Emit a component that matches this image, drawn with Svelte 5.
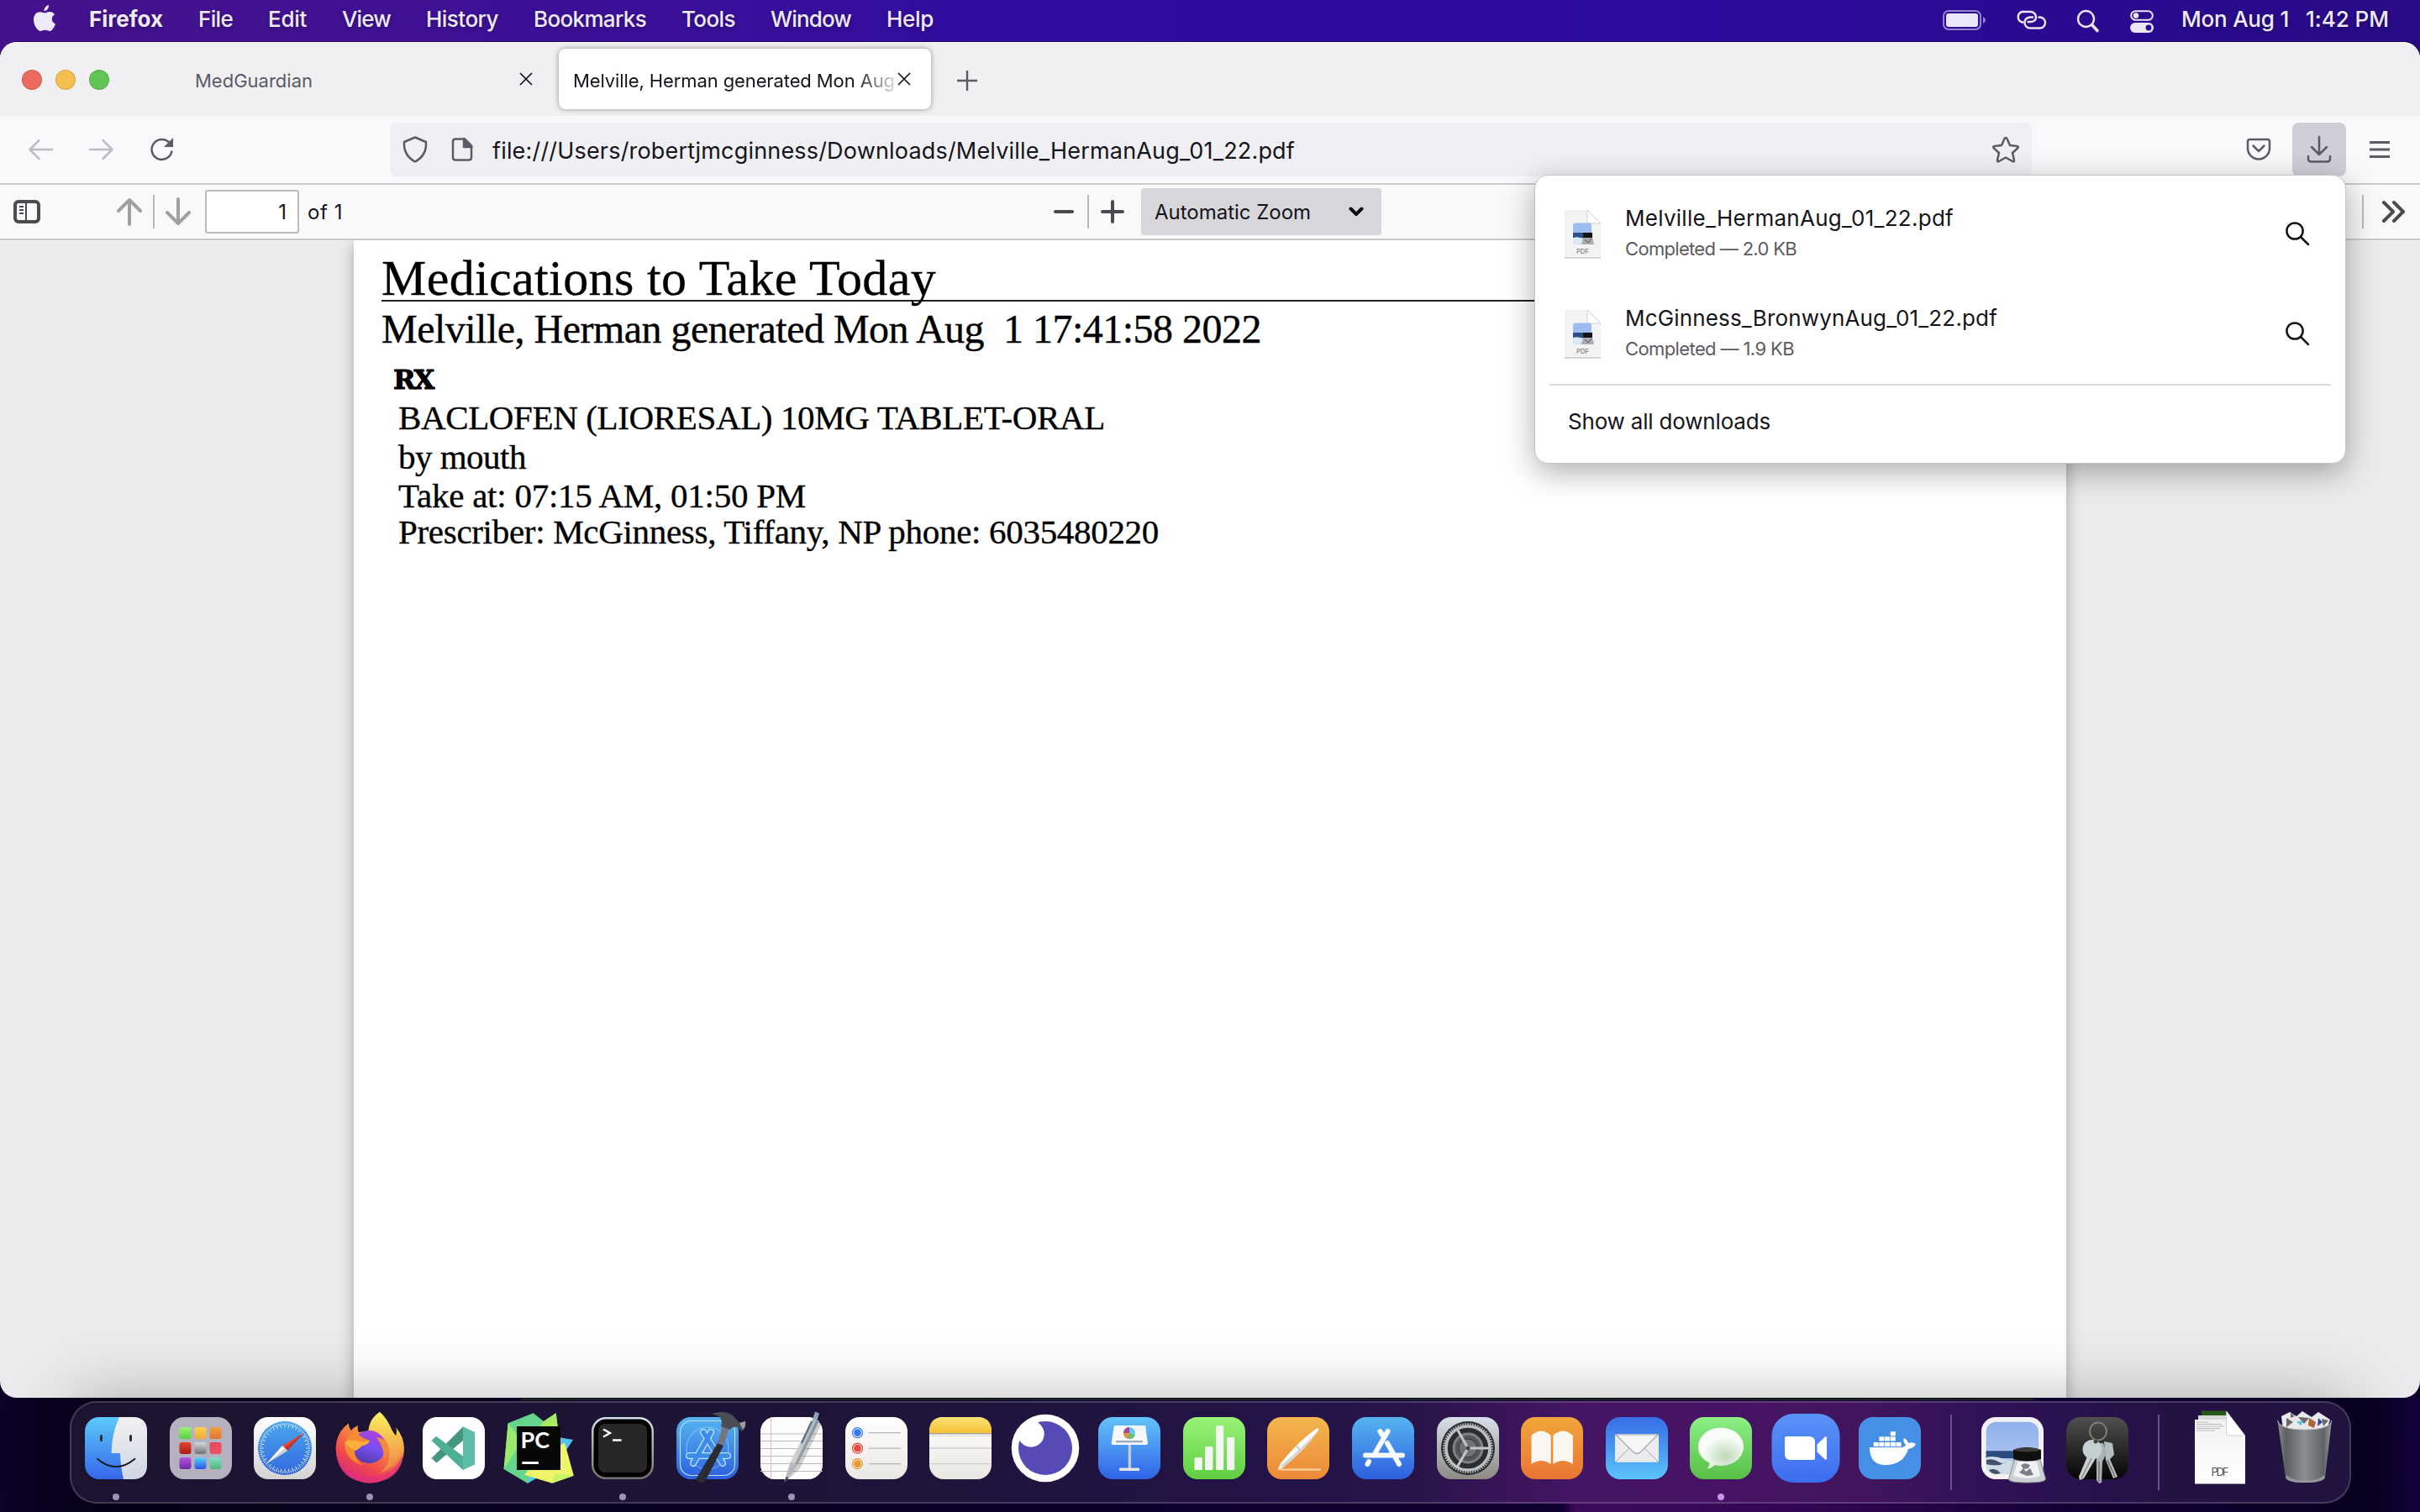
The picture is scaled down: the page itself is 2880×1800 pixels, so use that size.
<script>
  const menus = [
    { label: 'File', width: 41 },
    { label: 'Edit', width: 46 },
    { label: 'View', width: 58 },
    { label: 'History', width: 86 },
    { label: 'Bookmarks', width: 134 },
    { label: 'Tools', width: 64 },
    { label: 'Window', width: 96 },
    { label: 'Help', width: 56 }
  ];

  const downloads = [
    { name: 'Melville_HermanAug_01_22.pdf', nameWidth: 391, status: 'Completed — 2.0 KB', statusWidth: 204 },
    { name: 'McGinness_BronwynAug_01_22.pdf', nameWidth: 443, status: 'Completed — 1.9 KB', statusWidth: 201 }
  ];

  const apps = [
    'finder', 'launchpad', 'safari', 'firefox', 'vscode', 'pycharm', 'terminal', 'xcode', 'textedit',
    'reminders', 'notes', 'insomnia', 'keynote', 'numbers', 'pages', 'appstore', 'settings', 'books',
    'mail', 'messages', 'zoom', 'docker'
  ];
  const running = ['finder', 'firefox', 'terminal', 'textedit', 'messages'];

  const pads = [
    ['#9df27a', '#55cf3a'], ['#f8d24e', '#f0a93a'], ['#f0a23c', '#de7430'],
    ['#e8432f', '#a81f16'], ['#d5dadd', '#707070'], ['#e9455c', '#ea5564'],
    ['#b455e0', '#6f2aa5'], ['#55d5fa', '#2f50e2'], ['#7fe0cf', '#52b573']
  ];
  const ticks = Array.from({ length: 72 }, (_, i) => i * 5);
  const teeth = Array.from({ length: 60 }, (_, i) => i * 6);

  // Spreads a label over a set width by adjusting its tracking.
  function fit(node, width) {
    const range = document.createRange();
    range.selectNodeContents(node);
    const natural = range.getBoundingClientRect().width;
    node.style.letterSpacing = `${(width - natural) / node.textContent.length}px`;
  }
</script>

{#snippet magnifier()}
  <svg class="find" width="30" height="30" viewBox="0 0 30 30"><circle cx="12" cy="12" r="9.6" /><path d="M19 19l9 9" /></svg>
{/snippet}

{#snippet squircle(fill)}
  <rect x="13" y="19" width="74" height="74" rx="17" {fill} />
{/snippet}

{#snippet icon(name)}
  {#if name === 'finder'}
    {@render squircle('url(#gFinder)')}
    <path d="M54 19H70Q87 19 87 36V76Q87 93 70 93H59Q55.500 79 55 62H44.500Q45 38 54 19Z" fill="url(#gFace)" />
    <path d="M32.500 41.500v5M67.500 41.500v5" stroke="#2a2d33" stroke-width="3" stroke-linecap="round" />
    <path d="M28 68.700Q50 87.500 72.400 68.700" fill="none" stroke="#15171c" stroke-width="1.800" stroke-linecap="round" />
  {:else if name === 'launchpad'}
    {@render squircle('#b4b2bf')}
    {#each pads as pad, i}
      <linearGradient id={`pad${i}`} x2="0" y2="1"><stop stop-color={pad[0]} /><stop offset="1" stop-color={pad[1]} /></linearGradient>
      <rect x={24.500 + (i % 3) * 18} y={31 + Math.floor(i / 3) * 18} width="14" height="14" rx="3" fill={`url(#pad${i})`} />
    {/each}
  {:else if name === 'safari'}
    {@render squircle('url(#gPaper)')}
    <circle cx="50" cy="56" r="32" fill="url(#gSafari)" />
    {#each ticks as a, i}
      <path d={`M50 26v${i % 2 ? 2.500 : 5}`} stroke="#e6f2ff" stroke-width=".9" transform={`rotate(${a} 50 56)`} />
    {/each}
    <path d="M73 37.500L47 53l6 6z" fill="#e2483d" /><path d="M73 37.500L50 56l3 3z" fill="#b8342d" />
    <path d="M28 74.500L47 53l6 6z" fill="#fff" /><path d="M28 74.500L50 56l3 3z" fill="#cdd2d8" />
  {:else if name === 'firefox'}
    <path d="M62 13Q71 21 76 34Q79 39 81 41Q83 36 81 31Q91 43 91 57A40.500 40.500 0 0 1 9.600 57Q10 37 25 26.500Q25 32 28 35Q31 31 36 29Q35 34 37 37Q43 36 48 36Q50 21 62 13Z" fill="url(#gFox)" />
    <path d="M10 62Q20 89 50 90Q80 89 90 62Q88 96 50 97Q14 96 10 62Z" fill="#e0307d" opacity=".7" />
    <path d="M62 13Q49 21 49 36Q65 36 72 52Q78 72 62 86Q88 76 87 51Q86 44 81 41Q79 40 76 34Q71 21 62 13Z" fill="url(#gFlame)" />
    <circle cx="49.500" cy="54.500" r="19.500" fill="url(#gOrb)" />
    <path d="M33 36Q38 43 50 47Q49 51 43 52Q34 52 32 59Q32 70 42 76Q24 73 20 53Q22 41 33 36Z" fill="#f58a32" />
    <path d="M20 50Q23 45 33 47Q40 50 50 47Q48 52 41 53Q36 58 33 59Q26 56 20 50Z" fill="#fcb03a" />
    <path d="M58 43Q65 43 70 50Q73 60 67 69Q67 55 58 43Z" fill="#f08a42" />
  {:else if name === 'vscode'}
    {@render squircle('#fff')}
    <path d="M23.500 68l6 5.500L61 47V30.500z" fill="#46967f" />
    <path d="M23.500 47l5.500-5.200L61 65.500V82z" fill="#4db095" />
    <path d="M61 30.300L75 37v38.500L61 82z" fill="#5dbda6" />
  {:else if name === 'pycharm'}
    <path d="M68 42L91 46 70 78 37 98 20 80z" fill="#4ec6ef" />
    <path d="M43.600 14.300L13.600 26.300 8.600 81 36.800 97.700 50 70 74 42 70.700 14.300 56 24z" fill="#64d68c" />
    <path d="M13.600 26.300L8.600 81 30 48z" fill="#9be86b" /><path d="M56 24L70.700 14.300 74 40 48 34z" fill="#a8ea62" />
    <path d="M81 49.300L91.800 88.700 66 97.700 33 87.700 42 76z" fill="#eef568" /><path d="M70 86L91.800 88.700 66 97.700z" fill="#c8f56a" />
    <rect x="24" y="30" width="52" height="52" fill="#050805" />
    <text x="28.500" y="56" class="pc">PC</text><rect x="30.400" y="72" width="19.600" height="3" fill="#fff" />
  {:else if name === 'terminal'}
    {@render squircle('url(#gBezel)')}
    <rect x="15.500" y="21.500" width="69" height="69" rx="14.500" fill="#000" /><rect x="21" y="27" width="58" height="58" rx="8" fill="#272727" />
    <path d="M27 33.500l8 4.500-8 4.500M38 46.500h10.500" fill="none" stroke="#fff" stroke-width="2.400" />
  {:else if name === 'xcode'}
    {@render squircle('url(#gBlue)')}
    <g fill="none" stroke="#b9e2ff" stroke-width="1.200">
      <rect x="17.500" y="23.500" width="65" height="65" rx="13" /><circle cx="50" cy="56" r="25" opacity=".45" />
      <g stroke-width="8" stroke-linecap="round"><path d="M28 65h46M54 37L33 74M45 37L68 74" /></g>
      <g stroke="#3c8de8" stroke-width="5.400" stroke-linecap="round"><path d="M28 65h46M54 37L33 74M45 37L68 74" /></g>
    </g>
    <path d="M62 50L69 53 47 96Q41 99 36 93z" fill="#2b2c33" /><path d="M68 29L76 32 69 53 62 50z" fill="#74777f" />
    <path d="M55 15Q70 10 80 17L88 26 95 24Q97 31 91 36L85 31Q80 30 77 34L66 30Q70 18 55 15Z" fill="#4b4d54" /><path d="M88 26l7-2q1 6-3 10z" fill="#9a9ca2" />
  {:else if name === 'textedit'}
    {@render squircle('#fcfcfc')}
    <path d="M13 39h74M13 47.500h74M13 56.500h74M13 65.500h74M13 74.500h74M13 83.500h74" stroke="#bcbcbe" stroke-width="1" />
    <path d="M25.500 19v74" stroke="#f2b5b3" stroke-width="1" />
    <path d="M80 22L86 26 60 80 44 95 51 73z" fill="#000" opacity=".18" />
    <path d="M75.500 20L83 23.500 57 76 49 72z" fill="url(#gPen)" /><path d="M80 22L83 23.500 57 76 54 74.500z" fill="#6f7d88" opacity=".6" /><path d="M49 72l8 4-14 20-1.500-.7z" fill="#b4b8bd" /><path d="M44 90l2 1-3.500 6-1-.5z" fill="#333" />
    <path d="M78 12.500l5 2-2.500 8-5-2.500z" fill="#91a2ae" /><path d="M74 24L62 50" stroke="#5c6975" stroke-width="2" />
  {:else if name === 'reminders'}
    {@render squircle('url(#gWarm)')}
    {#each ['#3478f6', '#e84b3c', '#e9982f'] as c, i}
      <circle cx="27.500" cy={37.700 + i * 18.500} r="4.400" fill={c} /><circle cx="27.500" cy={37.700 + i * 18.500} r="6" fill="none" stroke={c} stroke-width="1.200" />
      <path d={`M41 ${37.700 + i * 18.500}h38`} stroke="#b6b5ba" stroke-width="1.300" />
    {/each}
  {:else if name === 'notes'}
    {@render squircle('url(#gWarm)')}
    <path d="M13 38V36Q13 19 30 19H70Q87 19 87 36V38Z" fill="url(#gNote)" />
    <path d="M13 38.700h74" stroke="#a8a39b" stroke-width="1.400" /><path d="M15 41.500h71" stroke="#b5b3ae" stroke-width="1" stroke-dasharray="1 1.500" />
    <path d="M13 56h74M13 74.700h74" stroke="#cfcdd0" stroke-width="1.300" />
  {:else if name === 'insomnia'}
    <circle cx="50" cy="56" r="40.300" fill="#fff" /><circle cx="50" cy="56" r="32" fill="#564bb6" /><circle cx="33" cy="39" r="15.700" fill="#fff" />
  {:else if name === 'keynote'}
    {@render squircle('url(#gSky)')}
    <rect x="48.700" y="52" width="3.400" height="28" fill="#c4cad6" /><rect x="38" y="79.500" width="24" height="3.500" rx="1" fill="#e2e4ea" />
    <path d="M32 29H69L72 50Q72 52 70 52H30.500Q28.500 52 28.500 50Z" fill="#f5f7fa" /><path d="M34 47h32v2.300H34z" fill="#9cacbc" />
    <circle cx="50" cy="38" r="7" fill="#66c8f4" /><path d="M50 38v-7a7 7 0 0 0-7 7z" fill="#a24a96" /><path d="M50 38h-7a7 7 0 0 0 5 6.600z" fill="#f09040" /><path d="M50 38l-2 6.700a7 7 0 0 0 8.700-4z" fill="#6cc064" />
  {:else if name === 'numbers'}
    {@render squircle('url(#gGreen)')}
    <g fill="#f3f7f2"><rect x="26.500" y="67" width="9.500" height="15" rx="1.500" /><rect x="39" y="54" width="9.500" height="28" rx="1.500" /><rect x="52" y="29.300" width="9.200" height="52.700" rx="1.500" /><rect x="65" y="43" width="9.200" height="39" rx="1.500" /></g>
  {:else if name === 'pages'}
    {@render squircle('url(#gOrange)')}
    <path d="M29 81.500h47" stroke="#fbd5a8" stroke-width="2" stroke-linecap="round" />
    <path d="M25.500 82L29 74Q48 50 71 33Q75 31 74 35Q60 56 32 79Z" fill="#fbfbfb" /><path d="M29 77Q52 58 74 35Q60 57 32 79Z" fill="#d9d4cf" /><path d="M47.500 53.500l4 4" stroke="#8d8a88" />
  {:else if name === 'appstore'}
    {@render squircle('url(#gBlue)')}
    <g stroke="#f7fafe" stroke-width="6" stroke-linecap="round"><path d="M29 64.500H73M55.500 36L41 61M46.500 36l3 5M55 50L69 75M33 72l-1.500 3" /></g>
  {:else if name === 'settings'}
    {@render squircle('url(#gSteel)')}
    <circle cx="50" cy="56" r="32" fill="#2b2d2e" />
    {#each teeth as a}<path d="M50 26v4" stroke="#b9bcbd" stroke-width="1.500" transform={`rotate(${a} 50 56)`} />{/each}
    <circle cx="50" cy="56" r="26" fill="none" stroke="#bcbfc0" stroke-width="3.500" /><circle cx="50" cy="56" r="17" fill="#55585a" stroke="#7e8183" stroke-width="3" /><circle cx="50" cy="56" r="11" fill="#6f7274" stroke="#333" />
    <path d="M50 56H75M50 56L37.500 34M50 56L37.500 78" stroke="#c3c6c7" stroke-width="3" /><circle cx="50" cy="56" r="2.500" fill="#444" />
  {:else if name === 'books'}
    {@render squircle('url(#gBook)')}
    <path d="M25.500 41Q37 30 48.700 41V75Q37 67 25.500 75Z" fill="#faf6f2" /><path d="M51.300 41Q63 30 74.800 41V75Q63 67 51.300 75Z" fill="#faf6f2" />
  {:else if name === 'mail'}
    {@render squircle('url(#gMail)')}
    <rect x="24" y="39.300" width="52" height="33.500" rx="2.500" fill="#ececee" /><path d="M25 72L41 56M75 72L59 56" stroke="#a9abb0" stroke-width="1" />
    <path d="M25 40L45 60Q50 65 55 60L75 40Z" fill="#f5f5f6" stroke="#a9abb0" stroke-width="1.200" />
  {:else if name === 'messages'}
    {@render squircle('url(#gMsg)')}
    <path d="M50 31.700C65 31.700 77 41.500 77 54.300S65 77 50 77Q46 77 42.500 76Q39 80 34 80.300Q37 77 36.500 73.500Q23 67 23 54.300C23 41.500 35 31.700 50 31.700Z" fill="url(#gBubble)" />
  {:else if name === 'zoom'}
    <rect x="9.500" y="15" width="81" height="82" rx="26" fill="url(#gZoom)" />
    <path d="M27 42H54Q61 42 61 49V67.500Q61 70 58.500 70H32Q25 70 25 63V44Q25 42 27 42Z" fill="#fff" /><path d="M63.500 51.500L73 42.500Q75 41.500 75 43.500V68.500Q75 70.500 73 69.500L63.500 60.500Z" fill="#fff" />
  {:else if name === 'docker'}
    {@render squircle('#4590e6')}
    <g fill="#fff">
      {#each [30.700, 37.400, 44.100, 50.800, 57.500] as x}<rect {x} y="49" width="6" height="5" />{/each}
      {#each [37.400, 44.100, 50.800] as x}<rect {x} y="42.400" width="6" height="5" />{/each}
      <rect x="50.800" y="36.300" width="6" height="5" />
      <path d="M26 55H64Q68 55 69 52Q65 48 67 44Q71 46 72 50Q77 48 81 51Q79 56 72 57Q66 76 45 76Q26 76 26 55Z" />
    </g>
  {:else if name === 'preview'}
    {@render squircle('#f3f1f4')}
    <rect x="18.600" y="24.700" width="62.500" height="62" rx="12" fill="url(#gSky2)" /><path d="M18.600 59.300H81V68H18.600z" fill="#2a4a80" /><path d="M18.600 67Q28 64 40 69T81 68V75Q81 87 69 87H31Q18.600 87 18.600 75Z" fill="#cfdce8" />
    <path d="M19 70q8-2 14 2t10 0l-8 4q-10 1-16-1zM22 82q8-3 14 4l-6 1q-6-1-8-5z" fill="#43526a" />
    <path d="M52 70H83L89.500 93Q88 97 67 97T45.500 93Z" fill="#cdd0d3" stroke="#8b8e92" /><path d="M56 72H79L83 89Q68 95 51 89Z" fill="#f0f1f2" /><path d="M60 76l5-2 6 2-2 4-6 1zM58 85l5-5 3 4 5-4 4 8-8 1z" fill="#787f88" />
    <path d="M51 58Q67 52 84 58V69Q67 74 51 69Z" fill="#101010" /><ellipse cx="67.500" cy="58" rx="15" ry="2.500" fill="#3a3a3a" />
  {:else if name === 'keychain'}
    {@render squircle('url(#gKeys)')}
    <ellipse cx="51" cy="36" rx="10" ry="10.500" fill="none" stroke="#857c70" stroke-width="2" />
    <path d="M58 48L68 50 70 64 65 69 74 90 69 92 60 70z" fill="#b3bdbf" /><path d="M48 50h9l4 12-5 10-1 25-3 1-3-4V70z" fill="#a9b3b5" />
    <path d="M62 70L71 90M52 72V96" stroke="#6b5f53" stroke-width="1.200" />
    <circle cx="44" cy="57.500" r="11.500" fill="#c4d0d1" /><path d="M38 66L48 68 34 92 29 94 28 90z" fill="#c4d0d1" /><path d="M43 68L31 92" stroke="#8d8074" stroke-width="1.200" /><circle cx="48" cy="48" r="2.500" fill="#4b463f" />
  {:else if name === 'document'}
    <path d="M28 11.500H57V20H28z" fill="#255717" /><path d="M24 17H60V24H24z" fill="#d8d8d8" />
    <path d="M20 22H58V12L80 41V98.500H20Z" fill="url(#gPaper2)" /><path d="M57.500 12L79.700 41H60Q57.500 41 57.500 38Z" fill="#fff" stroke="#c5c5c5" stroke-width=".8" />
    <path d="M22 25h14M22 27.500h30M22 30h33M22 32.500h28M22 35h22" stroke="#aaa" stroke-width=".8" />
    <text x="50" y="89" class="pdf" textLength="21">PDF</text>
  {:else if name === 'trash'}
    <path d="M22 18L32 13 40 18 47 12 58 19 66 13 80 22 76 34 24 34z" fill="#e9e9e9" /><path d="M28 20l8 5-8 6zM42 19l7 8 6-7zM70 21l8 2-6 7zM33 14l5 4-5 2z" fill="#68696c" /><path d="M55 20l8 5-2 7-7-3z" fill="#b0623a" /><path d="M40 24h8l-3 5z" fill="#53c3e3" /><path d="M66 20l5 5-6 5z" fill="#33479e" />
    <path d="M17.500 23Q21 34 50 34T82 23L74 91Q71 97 50 97T27 91Z" fill="url(#gBin)" /><path d="M17.500 23Q21 34 50 34T82 23" fill="none" stroke="#b7b9bb" stroke-width="1" />
    <path d="M28 88Q36 95 50 95T73 88L74 91Q71 97 50 97T27 91Z" fill="#a5a8aa" opacity=".7" />
  {/if}
{/snippet}

{#snippet slot(name, extra = '')}
  <li class={`slot ${extra}`}>
    <svg width="100" height="118" viewBox="0 0 100 118">
      {@render icon(name)}
      {#if running.includes(name)}<circle cx="50" cy="114" r="4" fill={name === 'messages' ? '#c596ea' : '#9d92b9'} />{/if}
    </svg>
  </li>
{/snippet}

<svg class="defs" width="0" height="0">
  <defs>
    {#each [['gFinder', '#5cc9f8', '#3567ea'], ['gFace', '#f1f1f3', '#ced7e3'], ['gPaper', '#ffffff', '#d3d3d3'], ['gSafari', '#4aa7ee', '#3468dd'], ['gFlame', '#fbf160', '#f07c45'], ['gBezel', '#d5e0ea', '#77716f'], ['gBlue', '#56b5f0', '#2d5fdf'], ['gPen', '#a5b7c5', '#d7d4cf'], ['gWarm', '#ffffff', '#e8e7e2'], ['gNote', '#fbe276', '#f4c235'], ['gSky', '#62c4f9', '#2f62e8'], ['gGreen', '#99f279', '#60cf42'], ['gOrange', '#f4b64d', '#ec8938'], ['gSteel', '#d8e1e9', '#8d8985'], ['gBook', '#f1a63a', '#e97535'], ['gMail', '#376de8', '#5cc3fa'], ['gMsg', '#8cf086', '#58bf47'], ['gZoom', '#5a92f7', '#3d6df0'], ['gSky2', '#8fb0ea', '#b6caf0'], ['gKeys', '#505050', '#050505'], ['gPaper2', '#f0f0f0', '#ffffff']] as [id, from, to]}
      <linearGradient {id} x2="0" y2="1"><stop stop-color={from} /><stop offset="1" stop-color={to} /></linearGradient>
    {/each}
    <linearGradient id="gFox" x1=".8" y1=".1" x2=".3" y2="1"><stop stop-color="#fbe24f" /><stop offset=".4" stop-color="#f7873b" /><stop offset=".75" stop-color="#ee4450" /><stop offset="1" stop-color="#d72f7a" /></linearGradient>
    <linearGradient id="gOrb" x1=".7" x2=".3" y2="1"><stop stop-color="#b03fdc" /><stop offset=".5" stop-color="#7b4ff0" /><stop offset="1" stop-color="#4d3aa8" /></linearGradient>
    <radialGradient id="gBubble" cx=".6" cy=".7"><stop stop-color="#c0d9b9" /><stop offset="1" stop-color="#fafdf9" /></radialGradient>
    <linearGradient id="gBin"><stop stop-color="#8c8f92" /><stop offset=".15" stop-color="#5d6063" /><stop offset=".5" stop-color="#8b8e90" /><stop offset=".85" stop-color="#606366" /><stop offset="1" stop-color="#9a9da0" /></linearGradient>
  </defs>
</svg>

<div class="desktop">
  <header class="menubar">
    <svg class="apple" width="26" height="32" viewBox="0 0 26 32">
      <path d="M18 0C18.300 4 15.500 7 12.500 7.200C12.200 3.500 15 .5 18 0Z" />
      <path d="M13 9.500C14.800 9.500 16.300 8 19 8C21.500 8 23.800 9.200 25 11.300C20.300 14 21 20.600 26 22.500C25 25.300 22.300 31 19.300 31C17.300 31 16.300 29.800 13.700 29.800S10 31 8.200 31C4.500 31 0 23.500 0 17.500C0 11.500 3.800 8.300 7.500 8.300C9.800 8.300 11.700 9.500 13 9.500Z" />
    </svg>
    <span class="app" use:fit={88}>Firefox</span>
    {#each menus as m}<span class="menu" use:fit={m.width}>{m.label}</span>{/each}
    <div class="status">
      <svg class="battery" width="52" height="26" viewBox="0 0 52 26"><rect x="1" y="2" width="44" height="22" rx="6" fill="none" stroke="#9384d2" stroke-width="2" /><rect x="4" y="5" width="38" height="16" rx="3" fill="#eae6f8" /><path d="M48 9q3 1.500 3 4t-3 4z" fill="#9384d2" /></svg>
      <svg class="link" width="38" height="26" viewBox="0 0 38 26"><path d="M9.500 15.500H8.500A6.500 6.500 0 0 1 8.500 3H19A6.500 6.500 0 0 1 25 9.500Q25 14.500 19 15H15.500" /><path d="M28.500 9.500H29.500A6.500 6.500 0 0 1 29.500 22.500H18A6.500 6.500 0 0 1 11.500 16Q11.500 10.500 17.500 9.500H21" /></svg>
      <svg class="spot" width="28" height="28" viewBox="0 0 28 28"><circle cx="11.500" cy="11.500" r="9.500" /><path d="M18.500 18.500L25 25.500" stroke-width="3.600" /></svg>
      <svg class="toggles" width="28" height="28" viewBox="0 0 28 28"><rect x="1.200" y="2.200" width="25.600" height="10.600" rx="5.300" fill="none" stroke="#eae6f8" stroke-width="2" /><circle cx="7" cy="7.500" r="3.200" fill="#eae6f8" /><rect y="16" width="28" height="12" rx="6" fill="#eae6f8" /><circle cx="22" cy="22" r="3.400" fill="#2c0b96" /></svg>
      <span class="date" use:fit={128}>Mon Aug 1</span>
      <span class="time" use:fit={99}>1:42 PM</span>
    </div>
  </header>

  <main class="window">
    <div class="tabs">
      <div class="lights"><i class="red"></i><i class="yellow"></i><i class="green"></i></div>
      <div class="tab">
        <span class="title" use:fit={140}>MedGuardian</span>
        <svg class="x" width="16" height="16" viewBox="0 0 16 16"><path d="M1 1l14 14M15 1L1 15" /></svg>
      </div>
      <div class="tab active">
        <span class="title" use:fit={383}>Melville, Herman generated Mon Aug</span>
        <svg class="x" width="16" height="16" viewBox="0 0 16 16"><path d="M1 1l14 14M15 1L1 15" /></svg>
      </div>
      <svg class="plus" width="24" height="24" viewBox="0 0 24 24"><path d="M12 0v24M0 12h24" /></svg>
    </div>

    <div class="nav">
      <svg class="ico dim back" width="28" height="24" viewBox="0 0 28 24"><path d="M28 12H2M12.500 1L1.500 12l11 11" /></svg>
      <svg class="ico dim fwd" width="28" height="24" viewBox="0 0 28 24"><path d="M0 12h26M15.500 1l11 11-11 11" /></svg>
      <svg class="ico reload" width="30" height="30" viewBox="0 0 30 30"><path d="M26.300 17.500A12 12 0 1 1 24 7.500" /><path d="M28 1v11H17z" fill="#5b5b66" stroke="none" /></svg>
      <div class="url">
        <svg class="ico shield" width="30" height="32" viewBox="0 0 30 32"><path d="M15 1.500L28 7Q29 23 15 30.500Q1 23 2 7Z" /></svg>
        <svg class="ico leaf" width="26" height="28" viewBox="0 0 26 28"><path d="M5 1.500H16L24 9.500V23.500Q24 26.500 21 26.500H5Q2 26.500 2 23.500V4.500Q2 1.500 5 1.500Z" /><path d="M15 1v10h9.500z" fill="#5b5b66" /></svg>
        <span class="address" use:fit={955}>file:///Users/robertjmcginness/Downloads/Melville_HermanAug_01_22.pdf</span>
        <svg class="ico star" width="34" height="32" viewBox="0 0 34 32"><path d="M17 2Q18 2 18.500 3L22 11L30.500 12Q33 12.500 31 14.500L25 20L27 28.500Q27.200 31 25 30L17 25.500L9 30Q6.800 31 7 28.500L9 20L3 14.500Q1 12.500 3.500 12L12 11L15.500 3Q16 2 17 2Z" /></svg>
      </div>
      <svg class="ico pocket" width="30" height="28" viewBox="0 0 30 28"><path d="M4.500 2H25.500Q28 2 28 4.500V12.500A13 13 0 0 1 2 12.500V4.500Q2 2 4.500 2Z" /><path d="M8.500 9.500L15 16l6.500-6.500" /></svg>
      <div class="dlbtn"><svg class="ico" width="30" height="32" viewBox="0 0 30 32"><path d="M15 1v20M6 13l9 9 9-9M2 24v3Q2 30.500 5.500 30.500H24.500Q28 30.500 28 27V24" /></svg></div>
      <svg class="burger" width="24" height="20" viewBox="0 0 24 20"><path d="M0 1.500h24M0 10h24M0 18.500h24" /></svg>
    </div>

    <div class="pdfbar">
      <svg width="32" height="28" viewBox="0 0 32 28"><rect x="2" y="2" width="28" height="24" rx="4" fill="none" stroke="#4a4a4f" stroke-width="4" /><path d="M15 3v22M7 8h5M7 12h5M7 16h5" stroke="#4a4a4f" stroke-width="2" /></svg>
      <svg class="grey up" width="30" height="32" viewBox="0 0 30 32"><path d="M15 31V2M2 15L15 2l13 13" /></svg>
      <i class="vsep"></i>
      <svg class="grey down" width="30" height="32" viewBox="0 0 30 32"><path d="M15 1v29M2 17l13 13 13-13" /></svg>
      <div class="pagebox">1</div>
      <span class="of" use:fit={42}>of 1</span>
      <svg class="minus" width="24" height="28" viewBox="0 0 24 28"><path d="M2 14h20" /></svg>
      <i class="vsep z"></i>
      <svg class="minus add" width="28" height="28" viewBox="0 0 28 28"><path d="M2 14h24M14 2v24" /></svg>
      <div class="select">
        <span use:fit={186}>Automatic Zoom</span>
        <svg width="18" height="12" viewBox="0 0 18 12"><path d="M2.500 2.500L9 9l6.500-6.500" fill="none" stroke="#0c0c0d" stroke-width="4" stroke-linecap="round" stroke-linejoin="round" /></svg>
      </div>
      <i class="vsep end"></i>
      <svg class="more" width="28" height="26" viewBox="0 0 28 26"><path d="M2 2l11 11L2 24M14 2l11 11-11 11" /></svg>
    </div>

    <div class="viewer">
      <article class="page">
        <h1><span use:fit={660}>Medications to Take Today</span></h1>
        <p class="who"><span use:fit={1047}>Melville, Herman generated Mon Aug  1 17:41:58 2022</span></p>
        <p class="rx"><span use:fit={47}>RX</span></p>
        <div class="med">
          <p><span use:fit={841}>BACLOFEN (LIORESAL) 10MG TABLET-ORAL</span></p>
          <p><span use:fit={152}>by mouth</span></p>
          <p><span use:fit={485}>Take at: 07:15 AM, 01:50 PM</span></p>
          <p class="last"><span use:fit={905}>Prescriber: McGinness, Tiffany, NP phone: 6035480220</span></p>
        </div>
      </article>
    </div>

    <aside class="popup">
      {#each downloads as d}
        <div class="item">
          <svg class="doc" width="46" height="60" viewBox="0 0 46 60">
            <path d="M1 1H29L44 17V58H1Z" fill="#f3f3f3" /><path d="M1 58h43" stroke="#c9c9c9" stroke-width="1.500" /><path d="M28 1L44 17H30Q28 17 28 15Z" fill="#fff" stroke="#d0d0d0" />
            <rect x="11" y="16.500" width="22" height="25" rx="3" fill="#9dbcf0" /><path d="M11 28h22v6H11z" fill="#2c4c84" /><path d="M11 34q8-2 12 2l6 4-4 1.500H14q-3 0-3-3z" fill="#dbe8f5" />
            <path d="M23 28h11v6H23z" fill="#151515" /><path d="M23 34h11l2 8H21z" fill="#a9acb0" /><path d="M25 36l4 4 4-5" stroke="#4c5158" fill="none" />
            <text x="22.500" y="53" class="docpdf" textLength="15">PDF</text>
          </svg>
          <div class="info">
            <span class="name" use:fit={d.nameWidth}>{d.name}</span>
            <span class="sub" use:fit={d.statusWidth}>{d.status}</span>
          </div>
          {@render magnifier()}
        </div>
      {/each}
      <div class="rule"></div>
      <div class="all"><span use:fit={241}>Show all downloads</span></div>
    </aside>
  </main>

  <footer class="dockarea">
    <ul class="dock">
      {#each apps as name}{@render slot(name)}{/each}
      <li class="divider"></li>
      {@render slot('preview', 'recent')}
      {@render slot('keychain', 'recent')}
      <li class="divider"></li>
      {@render slot('document', 'recent')}
      {@render slot('trash', 'recent')}
    </ul>
  </footer>
</div>

<style>
  :global(body) { margin: 0; overflow: hidden; background: #0b0124; }
  * { box-sizing: border-box; }
  svg { display: block; flex: none; overflow: visible; }
  span { white-space: pre; flex: none; }
  .defs { position: absolute; }
  .desktop {
    width: 2880px; height: 1800px; display: flex; flex-direction: column;
    font-family: Inter, 'Liberation Sans', sans-serif; color: #15141a;
    background: linear-gradient(90deg, #45128c 0, #3a1099 800px, #300ca0 1200px, #2c0a9c 2000px, #290a86 100%) 0 0 / 100% 90px no-repeat, #0b0124;
  }
  .menubar {
    height: 50px; flex: none; display: flex; align-items: center; padding: 0 37px 5px 40px;
    color: #eeeaf8; font-size: 26px; font-weight: 500; line-height: 45px; text-shadow: 0 2px 4px rgba(0, 0, 0, .3);
  }
  .apple { fill: #eeeaf8; margin: 0 40px 2px 0; }
  .app { font-weight: 700; }
  .menu { margin-left: 42px; }
  .status { margin-left: auto; display: flex; align-items: center; }
  .status svg { fill: none; stroke: none; }
  .status .link, .status .spot { stroke: #eae6f8; stroke-width: 2.400; stroke-linecap: round; }
  .battery { margin: 3px 34px 0 0; }
  .link { margin: 2px 35px 0 0; }
  .spot { margin: 4px 36px 0 0; }
  .toggles { margin: 4px 33px 0 0; }
  .date { margin-right: 20px; }

  .window {
    height: 1614px; flex: none; display: flex; flex-direction: column; position: relative;
    border-radius: 20px; background: #ebebed; box-shadow: 0 0 0 1px rgba(20, 0, 60, .5);
  }
  .tabs { height: 88px; flex: none; display: flex; align-items: center; background: #f0f0f3; border-radius: 20px 20px 0 0; border-top: 1px solid #fafafc; }
  .lights { display: flex; gap: 16px; margin-left: 26px; }
  .lights i { width: 24px; height: 24px; border-radius: 50%; border: 1px solid rgba(0, 0, 0, .12); }
  .red { background: #ed6a5e; }
  .yellow { background: #f5bf4f; }
  .green { background: #61c554; }
  .tab { display: flex; align-items: center; font-size: 22px; height: 72px; margin-bottom: 1px; }
  .tab:not(.active) { width: 433px; margin-left: 82px; padding: 0 11px 0 20px; color: #5b5b66; justify-content: space-between; }
  .title { padding-top: 4px; }
  .active { width: 443px; margin-left: 20px; padding: 0 24px 0 17px; background: #fff; border-radius: 8px; box-shadow: 0 0 6px rgba(0, 0, 0, .4); }
  .active .title { width: 390px; mask-image: linear-gradient(90deg, #000 335px, rgba(0, 0, 0, .12) 385px); }
  .active .x { margin-left: -4px; }
  .x { stroke: #15141a; stroke-width: 1.700; margin-bottom: 1px; }
  .plus { margin-left: 31px; margin-top: 2px; stroke: #5b5b66; stroke-width: 2.400; }

  .nav { height: 82px; flex: none; display: flex; align-items: center; background: #f9f9fb; border-bottom: 2px solid #ccc; }
  .ico { fill: none; stroke: #5b5b66; stroke-width: 2.500; stroke-linecap: round; stroke-linejoin: round; }
  .dim { stroke: #bdbdc3; }
  .back { margin-left: 34px; }
  .fwd { margin-left: 45px; }
  .reload { margin-left: 43px; }
  .url { width: 1954px; height: 64px; margin-left: 256px; border-radius: 8px; background: #f0f0f4; display: flex; align-items: center; padding: 0 14px 0 15px; }
  .leaf { margin-left: 28px; }
  .address { margin: 2px auto 0 23px; font-size: 27px; }
  .pocket { margin-left: 255px; }
  .dlbtn { width: 64px; height: 64px; margin-left: 25px; border-radius: 8px; background: #cfcfd8; display: grid; place-items: center; }
  .burger { margin-left: 28px; stroke: #5b5b66; stroke-width: 2.800; }

  .pdfbar { height: 66px; flex: none; display: flex; align-items: center; background: #f9f9fa; border-bottom: 2px solid #c8c8ca; padding-left: 16px; font-size: 24px; }
  .grey { fill: none; stroke: #a0a0a2; stroke-width: 4; stroke-linecap: round; stroke-linejoin: round; }
  .up { margin-left: 91px; }
  .vsep { width: 2px; height: 40px; background: #b8b8ba; margin-left: 13px; flex: none; }
  .down { margin-left: 13px; }
  .pagebox { width: 112px; height: 52px; margin-left: 17px; border: 2px solid #bbbbbc; border-radius: 3px; background: #fff; display: flex; align-items: center; justify-content: flex-end; padding-right: 13px; }
  .of { margin-left: 10px; }
  .minus { margin-left: 846px; fill: none; stroke: #4a4a4f; stroke-width: 4; stroke-linecap: round; }
  .z { margin-left: 16px; }
  .add { margin-left: 14px; }
  .select { width: 286px; height: 56px; margin-left: 20px; border-radius: 4px; background: #d7d7db; display: flex; align-items: center; justify-content: space-between; padding: 0 21px 0 16px; }
  .end { margin-left: 1167px; }
  .more { margin-left: 22px; fill: none; stroke: #4a4a4f; stroke-width: 4; stroke-linecap: round; stroke-linejoin: round; }

  .viewer { flex: 1; overflow: hidden; border-radius: 0 0 20px 20px; padding-left: 421px; }
  .page { width: 2038px; height: 100%; background: #fff; box-shadow: 0 6px 16px rgba(0, 0, 0, .3); padding-left: 33px; font-family: 'Liberation Serif', serif; color: #000; -webkit-text-stroke: .35px #000; }
  h1 { margin: 0; width: 1972px; height: 73px; padding-top: 20px; border-bottom: 2px solid #222; font-size: 60px; line-height: 50px; font-weight: 400; }
  p { margin: 0; }
  .who { font-size: 48px; line-height: 65px; }
  .rx { margin: 6px 0 0 14px; font: 700 32px/44px 'DejaVu Serif', serif; -webkit-text-stroke: 1px #000; }
  .med { margin-left: 20px; font-size: 41px; line-height: 46.500px; }
  .last { line-height: 39.500px; }

  .popup { position: absolute; left: 1826px; top: 158px; width: 966px; height: 344px; border-radius: 16px; background: #fff; border: 1px solid #c4c4c6; box-shadow: 0 10px 36px rgba(0, 0, 0, .32); padding: 9px 17px 0; display: flex; flex-direction: column; z-index: 2; }
  .item { height: 119px; display: flex; align-items: center; padding: 0 25px 0 17px; }
  .doc { margin-top: 2px; }
  .info { flex: 1; display: flex; flex-direction: column; align-items: flex-start; margin: 0 0 2px 27px; }
  .name { font-size: 26px; line-height: 38px; }
  .sub { font-size: 22px; line-height: 34px; color: #5b5b60; }
  .find { fill: none; stroke: #15141a; stroke-width: 2.500; stroke-linecap: round; }
  .rule { height: 2px; background: #dcdcde; flex: none; margin-top: 1px; }
  .all { padding: 26px 0 0 22px; font-size: 26px; line-height: 34px; }
  .docpdf { font: 8px Inter, sans-serif; text-anchor: middle; fill: #777; }
  .pdf { font: 13px Inter, sans-serif; text-anchor: middle; fill: #555; }
  .pc { font: 700 27px Lato, sans-serif; fill: #fff; }

  .dockarea {
    flex: 1; padding: 4px 82px 0 83px; position: relative;
    background:
      linear-gradient(#14181a 60%, #34373a 60%) 620px 0 / 1800px 3px no-repeat,
      linear-gradient(90deg, transparent 1860px, #470c6c 1875px, #3a0860 2150px, transparent 2500px) 0 100% / 100% 10px no-repeat,
      linear-gradient(90deg, #0d0127, #07021a 120px, #0c0030 1200px, #120038 1500px, #12003a 2600px, #080220 2820px, #14003c);
  }
  .dock {
    margin: 0; padding: 0 0 0 3px; list-style: none; height: 122px; display: flex; border: 2px solid rgba(255, 255, 255, .17); border-radius: 32px;
    background: linear-gradient(90deg, #1c1330 0, #1e1438 900px, #231347 1450px, #291449 1600px, #431563 1780px, #481366 1950px, #41155d 2130px, #2e1256 2280px, #241144 2500px, #21133f 100%);
    background-clip: border-box; box-shadow: 0 0 80px rgba(0, 0, 0, .3);
  }
  .slot { width: 100.520px; flex: none; display: flex; justify-content: center; margin-top: -2px; }
  .recent { width: 101px; }
  .divider { width: 45px; flex: none; display: flex; justify-content: center; padding-top: 14px; }
  .divider::before { content: ''; width: 2px; height: 90px; background: #66528a; }
</style>
